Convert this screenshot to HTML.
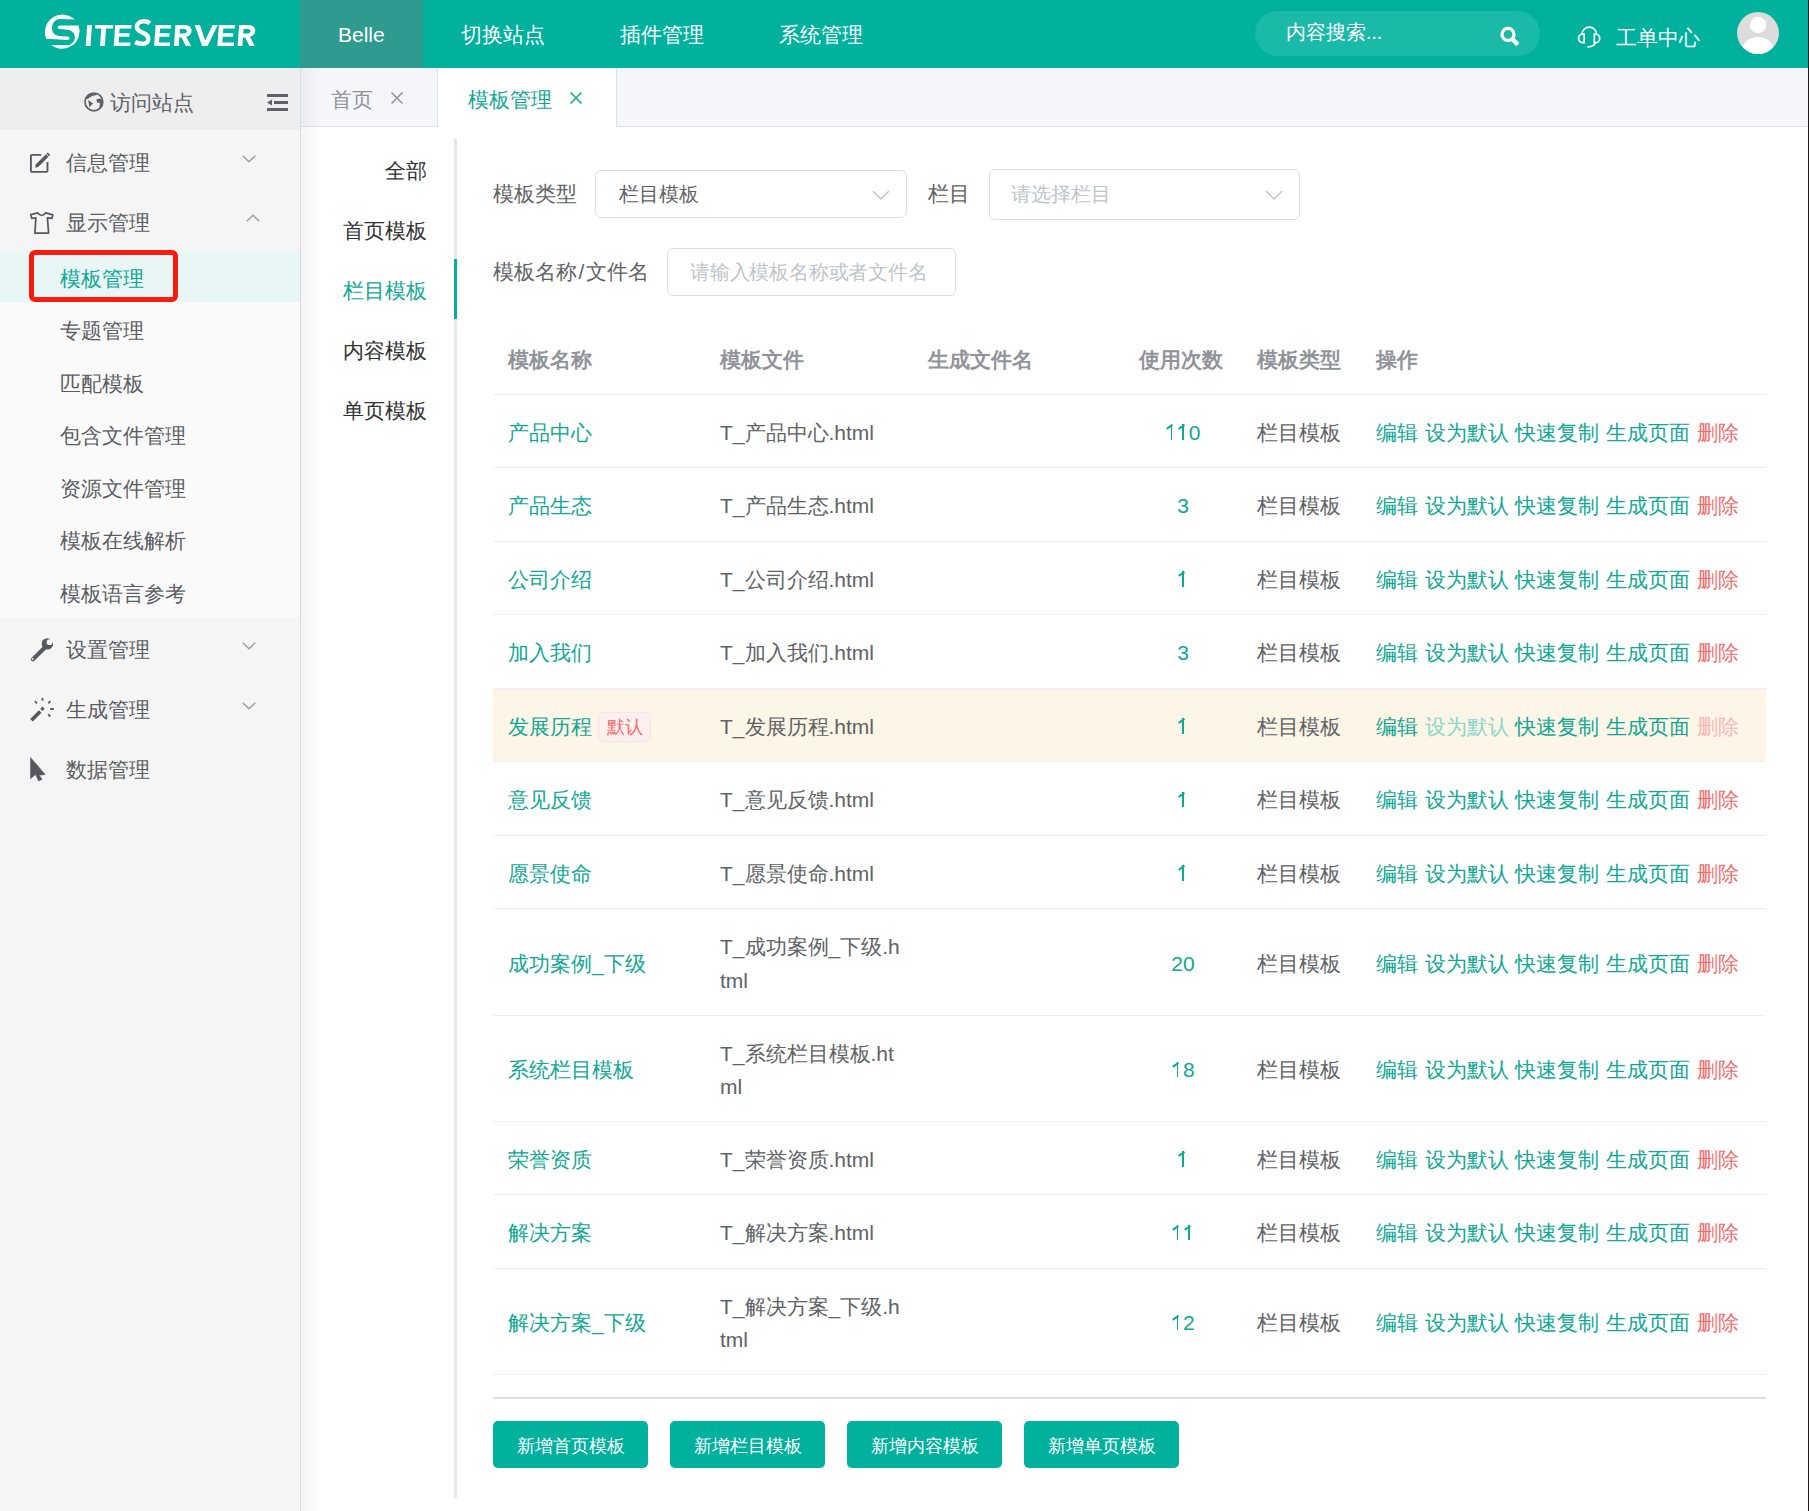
<!DOCTYPE html>
<html><head><meta charset="utf-8">
<style>
*{box-sizing:border-box;margin:0;padding:0}
html,body{width:1809px;height:1511px;overflow:hidden;background:#fff}
body{position:relative;font-family:"Liberation Sans",sans-serif;font-size:21px;line-height:21px;color:#606266}
.a{position:absolute}
.t{position:absolute;white-space:nowrap;line-height:21px}
#hdr{left:0;top:0;width:1809px;height:68px;background:#00b19d}
#side{left:0;top:68px;width:300px;height:1443px;background:#f5f5f5}
.sic{fill:#55585f}
.chev{position:absolute;width:14px;height:8px}
.lnk{color:#0fa894}
.d1{display:inline-block;width:11.7px;height:21px;position:relative;vertical-align:top}.d1::before{content:"";position:absolute;left:5.2px;top:2.6px;width:1.8px;height:15.2px;background:currentColor}.d1::after{content:"";position:absolute;left:0.8px;top:4.3px;width:6.6px;height:1.6px;background:currentColor;transform:rotate(-34deg)}
</style></head><body>
<!-- HEADER -->
<div id="hdr" class="a"></div>
<div class="a" style="left:300px;top:0;width:123px;height:68px;background:#2e9b8e"></div>
<!--LOGO-->
<svg class="a" style="left:0;top:0" width="300" height="68" viewBox="0 0 300 68">
 <g fill="#fff">
  <path d="M46.2 38.8 A17.6 17.6 0 0 1 74.8 19.6 L60 19 C55.5 19.3 52.3 22.8 52 27.5 C51.7 32.5 55 36.2 61.5 36.2 L67.6 36.5 C70.2 36.7 70.2 39.9 67.6 39.9 Z"/>
  <path d="M78.7 25.6 A17.6 17.6 0 0 1 51.2 45.1 L67 45.2 C72 45 74.9 41 74.9 37 C74.8 32.5 71 29.5 65.5 29.4 L59.5 29.1 C57.2 29 57.2 25.6 59.5 25.6 Z"/>
 </g>
 <g fill="#fff" transform="translate(0,46) skewX(-4) translate(0,-46)">
  <path d="M85.7 25 h4.8 v21 h-4.8 Z"/>
  <path d="M93.8 25 h18 v3.5 h-7 v17.5 h-4.8 v-17.5 h-6.2 Z"/>
  <path d="M113.7 25 h16.3 v3.5 h-11.6 v4.7 h10.4 v3.5 h-10.4 v5.8 h11.8 v3.5 h-16.5 Z"/>
  <path d="M154.1 25 h15.6 v3.5 h-10.9 v4.7 h9.9 v3.5 h-9.9 v5.8 h11.1 v3.5 h-15.8 Z"/>
  <path fill-rule="evenodd" d="M173.9 46 V25 H183.5 C188 25 190.6 27.8 190.6 31 C190.6 34 188.6 36.2 185.6 36.8 L191.2 46 H185.8 L180.9 37.4 H178.7 V46 Z M178.7 29 H182.8 C184.8 29 185.9 30 185.9 31.2 C185.9 32.5 184.8 33.4 182.8 33.4 H178.7 Z"/>
  <path d="M193.3 25 H198.5 L204.8 40.5 L211.1 25 H216.3 L207.6 46 H202 Z"/>
  <path d="M217.4 25 h16.2 v3.5 h-11.5 v4.7 h10.3 v3.5 h-10.3 v5.8 h11.7 v3.5 h-16.4 Z"/>
  <path fill-rule="evenodd" d="M237.6 46 V25 H247.2 C251.7 25 254.2 27.8 254.2 31 C254.2 34 252.3 36.2 249.3 36.8 L254.8 46 H249.4 L244.6 37.4 H242.4 V46 Z M242.4 29 H246.5 C248.5 29 249.6 30 249.6 31.2 C249.6 32.5 248.5 33.4 246.5 33.4 H242.4 Z"/>
 </g>
 <path transform="translate(0,46) skewX(-4) translate(0,-46)" d="M148.3 23.2 C146.5 21.8 144.3 21.3 141.8 21.3 C137.8 21.3 135.5 23.6 135.5 26.6 C135.5 30 138.2 31.4 141.8 32.8 C145.6 34.2 147.8 35.9 147.8 39.4 C147.8 42.4 145.3 43.8 141.8 43.8 C139 43.8 136.8 43.2 134.8 42" fill="none" stroke="#fff" stroke-width="4.4"/>
</svg>
<div class="t" style="left:338px;top:24px;color:#fff">Belle</div>
<div class="t" style="left:461px;top:24px;color:#fff">切换站点</div>
<div class="t" style="left:620px;top:24px;color:#fff">插件管理</div>
<div class="t" style="left:779px;top:24px;color:#fff">系统管理</div>
<div class="a" style="left:1255px;top:11px;width:285px;height:45px;border-radius:23px;background:rgba(255,255,255,0.105)"></div>
<div class="t" style="left:1286px;top:23px;color:#fff;font-size:19.5px;line-height:19.5px">内容搜索...</div>
<svg class="a" style="left:1499px;top:26px" width="24" height="22" viewBox="0 0 24 22">
 <circle cx="9" cy="8.4" r="6" fill="none" stroke="#fff" stroke-width="3.3"/>
 <path d="M12.8 12.6 L19 18.6" stroke="#fff" stroke-width="4.3" stroke-linecap="butt"/>
</svg>
<svg class="a" style="left:1576px;top:24px" width="26" height="26" viewBox="0 0 26 26">
 <g fill="none" stroke="#fff" stroke-width="1.7">
 <path d="M6 10.4 A7.3 7.3 0 0 1 20.6 10.4"/>
 <path d="M8.2 10.1 V18.6 H6.6 C4.1 18.6 2.6 16.5 2.6 14.4 C2.6 12.2 4.1 10.1 6.6 10.1 Z"/>
 <path d="M18.3 10.1 V18.6 H19.8 C22.3 18.6 23.7 16.5 23.7 14.4 C23.7 12.2 22.3 10.1 19.8 10.1 Z"/>
 <path d="M19.3 18.2 C18.8 21.2 16 23 11.4 22.9"/>
 </g>
</svg>
<div class="t" style="left:1616px;top:27px;color:#fff">工单中心</div>
<svg class="a" style="left:1737px;top:12px" width="42" height="42" viewBox="0 0 42 42">
 <defs><clipPath id="av"><circle cx="21" cy="21" r="21"/></clipPath></defs>
 <circle cx="21" cy="21" r="21" fill="#dcdcdc"/>
 <g clip-path="url(#av)" fill="#fff">
  <circle cx="21" cy="13" r="8.3"/>
  <ellipse cx="21" cy="39" rx="16" ry="14"/>
 </g>
</svg>

<div class="a" style="left:1808px;top:0;width:1px;height:1511px;background:#231619;z-index:9"></div>
<!-- SIDEBAR -->
<div id="side" class="a"></div>
<div class="a" style="left:0;top:68px;width:300px;height:62px;background:#eeeeee"></div>
<div class="a" style="left:300px;top:68px;width:1px;height:1443px;background:#d8dbe2"></div>
<svg class="a" style="left:84px;top:92px" width="20" height="20" viewBox="0 0 20 20">
 <circle cx="9.9" cy="9.9" r="8.9" fill="none" stroke="#5f6168" stroke-width="1.7"/>
 <path d="M1.5 7 C3 3 7 1 11 1 L13.5 1.6 L12.3 3.2 C9 3.3 6 4.5 3.8 7 Z" fill="#5f6168"/>
 <path d="M4.2 8 L9.1 11.4 L5.3 15.3 Z" fill="#5f6168"/>
 <path d="M12.3 7.3 L17.3 6.6 L18.8 9.5 C18.8 13 17.5 15.8 15 17.7 L16 10.8 L13.2 10.7 Z" fill="#5f6168"/>
</svg>
<div class="t" style="left:110px;top:92px;color:#5f6168">访问站点</div>
<svg class="a" style="left:267px;top:94px" width="22" height="18" viewBox="0 0 22 18">
 <rect x="0" y="0" width="21" height="3" fill="#5f6168"/>
 <rect x="7" y="7" width="14" height="3" fill="#5f6168"/>
 <path d="M0 8.5 L5 5.5 L5 11.5 Z" fill="#5f6168"/>
 <rect x="0" y="14" width="21" height="3" fill="#5f6168"/>
</svg>


<!-- side menu -->
<svg class="a" style="left:29px;top:151px" width="24" height="24" viewBox="0 0 24 24">
 <path d="M12.3 3.9 H2.8 Q1.9 3.9 1.9 4.8 V20 Q1.9 20.9 2.8 20.9 H17.6 Q18.5 20.9 18.5 20 V10.9" fill="none" stroke="#55585f" stroke-width="1.85"/>
 <path d="M6.1 16.7 L6.96 13.36 L16.96 3.36 L19.44 5.84 L9.44 15.84 Z" fill="#55585f"/>
 <path d="M17.46 2.86 L18.76 1.56 L21.24 4.04 L19.94 5.34 Z" fill="#55585f"/>
</svg>
<div class="t" style="left:66px;top:152px;color:#5a5d64">信息管理</div>
<svg class="chev" style="left:242px;top:155px" viewBox="0 0 14 8"><path d="M0.7 0.7 L7 6.8 L13.3 0.7" fill="none" stroke="#9a9ca2" stroke-width="1.4"/></svg>
<svg class="a" style="left:29px;top:211px" width="26" height="25" viewBox="0 0 26 25">
 <path d="M8.7 1.9 C10 4 11.2 4.3 12.7 4.3 C14.2 4.3 15.4 4 16.6 1.8 L23.8 3.8 L22.8 7.4 L18.4 6.8 L19.6 22 L5.9 22 L6.9 6.8 L2.9 7.4 L1.7 3.7 Z" fill="none" stroke="#55585f" stroke-width="1.75" stroke-linejoin="round"/>
</svg>
<div class="t" style="left:66px;top:212px;color:#5a5d64">显示管理</div>
<svg class="chev" style="left:246px;top:214px" viewBox="0 0 14 8"><path d="M0.7 7.3 L7 1.2 L13.3 7.3" fill="none" stroke="#9a9ca2" stroke-width="1.4"/></svg>

<div class="a" style="left:0;top:250px;width:300px;height:367px;background:#fafafa"></div>
<div class="a" style="left:0;top:250px;width:300px;height:52px;background:#e8f7f5"></div>
<div class="a" style="left:29px;top:250px;width:149px;height:52px;border:5px solid #ff1a0f;border-radius:6px"></div>
<div class="t lnk" style="left:60px;top:268px">模板管理</div>
<div class="t" style="left:60px;top:320px;color:#5a5d64">专题管理</div>
<div class="t" style="left:60px;top:373px;color:#5a5d64">匹配模板</div>
<div class="t" style="left:60px;top:425px;color:#5a5d64">包含文件管理</div>
<div class="t" style="left:60px;top:478px;color:#5a5d64">资源文件管理</div>
<div class="t" style="left:60px;top:530px;color:#5a5d64">模板在线解析</div>
<div class="t" style="left:60px;top:583px;color:#5a5d64">模板语言参考</div>

<svg class="a" style="left:29px;top:637px" width="26" height="26" viewBox="0 0 26 26">
 <defs><mask id="wm" maskUnits="userSpaceOnUse" x="0" y="0" width="26" height="26">
  <rect width="26" height="26" fill="#fff"/>
  <circle cx="20.5" cy="5.2" r="2.9" fill="#000"/>
  <path d="M20.5 5.2 L22 -2 L29 5 Z" fill="#000"/>
  <circle cx="3.7" cy="22" r="0.95" fill="#000"/>
 </mask></defs>
 <g mask="url(#wm)" fill="#55585f">
  <circle cx="18.4" cy="6.9" r="5.7"/>
  <path d="M3.9 22.4 L15.6 10.7" stroke="#55585f" stroke-width="4.1" stroke-linecap="round"/>
 </g>
</svg>
<div class="t" style="left:66px;top:639px;color:#5a5d64">设置管理</div>
<svg class="chev" style="left:242px;top:642px" viewBox="0 0 14 8"><path d="M0.7 0.7 L7 6.8 L13.3 0.7" fill="none" stroke="#9a9ca2" stroke-width="1.4"/></svg>
<svg class="a" style="left:29px;top:697px" width="26" height="26" viewBox="0 0 26 26">
 <path d="M2.5 23.2 L11.2 14.5" stroke="#55585f" stroke-width="3.7" stroke-linecap="butt"/>
 <path d="M13.5 9.6 L15.7 11.8 L13.5 14 L11.3 11.8 Z" fill="#55585f"/>
 <path d="M13.5 1.1 V3.8 M5.9 4.2 L8 6.3 M21.4 4.2 L19.3 6.3 M21.2 12 H24.8 M19.2 17.4 L21.3 19.5" stroke="#55585f" stroke-width="1.8"/>
</svg>
<div class="t" style="left:66px;top:699px;color:#5a5d64">生成管理</div>
<svg class="chev" style="left:242px;top:702px" viewBox="0 0 14 8"><path d="M0.7 0.7 L7 6.8 L13.3 0.7" fill="none" stroke="#9a9ca2" stroke-width="1.4"/></svg>
<svg class="a" style="left:29px;top:756px" width="18" height="26" viewBox="0 0 18 26">
 <path d="M1.5 1.4 L1.5 22.8 L6.5 18.6 L9.6 24.9 L13.1 23.4 L10.3 19.3 L16.2 18.5 Z" fill="#55585f" stroke="#55585f" stroke-width="0.5" stroke-linejoin="round"/>
</svg>
<div class="t" style="left:66px;top:759px;color:#5a5d64">数据管理</div>


<!-- TABS BAR -->
<div class="a" style="left:301px;top:68px;width:1508px;height:59px;background:#f5f6fa;border-bottom:1px solid #dfe2ea"></div>
<div class="a" style="left:301px;top:68px;width:20px;height:1443px;background:linear-gradient(to right,rgba(0,0,0,0.045),rgba(0,0,0,0))"></div>
<div class="a" style="left:437px;top:68px;width:1px;height:58px;background:#dfe2ea"></div>
<div class="a" style="left:438px;top:68px;width:179px;height:59px;background:#fff;border-right:1px solid #dfe2ea"></div>
<div class="t" style="left:331px;top:89px;color:#909399">首页</div>
<svg class="a" style="left:390px;top:91px" width="14" height="14" viewBox="0 0 14 14"><path d="M1.5 1.5 L12.5 12.5 M12.5 1.5 L1.5 12.5" stroke="#909399" stroke-width="1.5"/></svg>
<div class="t lnk" style="left:468px;top:89px">模板管理</div>
<svg class="a" style="left:569px;top:91px" width="14" height="14" viewBox="0 0 14 14"><path d="M1.5 1.5 L12.5 12.5 M12.5 1.5 L1.5 12.5" stroke="#0fa894" stroke-width="1.5"/></svg>

<!-- VERTICAL TABS -->
<div class="a" style="left:454px;top:139px;width:3px;height:1359px;background:#e4e7ed"></div>
<div class="a" style="left:454px;top:259px;width:3px;height:60px;background:#00b19d"></div>
<div class="t" style="right:1382px;top:160px;color:#303133">全部</div>
<div class="t" style="right:1382px;top:220px;color:#303133">首页模板</div>
<div class="t lnk" style="right:1382px;top:280px">栏目模板</div>
<div class="t" style="right:1382px;top:340px;color:#303133">内容模板</div>
<div class="t" style="right:1382px;top:400px;color:#303133">单页模板</div>

<!-- FORM -->
<div class="t" style="left:493px;top:183px">模板类型</div>
<div class="a" style="left:595px;top:170px;width:312px;height:48px;border:1px solid #dcdfe6;border-radius:6px"></div>
<div class="t" style="left:619px;top:184px;font-size:19.5px">栏目模板</div>
<svg class="a" style="left:872px;top:190px" width="18" height="10" viewBox="0 0 18 10"><path d="M1 1 L9 9 L17 1" fill="none" stroke="#c0c4cc" stroke-width="1.5"/></svg>
<div class="t" style="left:928px;top:183px">栏目</div>
<div class="a" style="left:989px;top:169px;width:311px;height:51px;border:1px solid #dcdfe6;border-radius:6px"></div>
<div class="t" style="left:1011px;top:184px;color:#c0c4cc;font-size:19.5px">请选择栏目</div>
<svg class="a" style="left:1265px;top:190px" width="18" height="10" viewBox="0 0 18 10"><path d="M1 1 L9 9 L17 1" fill="none" stroke="#c0c4cc" stroke-width="1.5"/></svg>
<div class="t" style="left:493px;top:261px">模板名称<span style="padding:0 1.6px">/</span>文件名</div>
<div class="a" style="left:667px;top:248px;width:289px;height:48px;border:1px solid #dcdfe6;border-radius:6px"></div>
<div class="t" style="left:690px;top:262px;color:#c0c4cc;font-size:19.5px"><span style="letter-spacing:-0.2px">请输入模板名称或者文件名</span></div>

<!-- TABLE -->
<div class="t" style="left:508px;top:349px;color:#909399;font-weight:bold">模板名称</div>
<div class="t" style="left:720px;top:349px;color:#909399;font-weight:bold">模板文件</div>
<div class="t" style="left:928px;top:349px;color:#909399;font-weight:bold">生成文件名</div>
<div class="t" style="left:1139px;top:349px;color:#909399;font-weight:bold">使用次数</div>
<div class="t" style="left:1257px;top:349px;color:#909399;font-weight:bold">模板类型</div>
<div class="t" style="left:1376px;top:349px;color:#909399;font-weight:bold">操作</div>
<div class="a" style="left:493px;top:394px;width:1273px;height:1px;background:#ebeef5"></div>
<div class="t lnk" style="left:508px;top:421.9px">产品中心</div>
<div class="t" style="left:720px;top:421.9px">T_产品中心.html</div>
<div class="t lnk" style="left:1124px;width:118px;text-align:center;top:421.9px"><i class="d1"></i><i class="d1"></i>0</div>
<div class="t" style="left:1257px;top:421.9px">栏目模板</div>
<div class="t lnk" style="left:1376px;word-spacing:0.9px;top:421.9px">编辑 <span>设为默认</span> 快速复制 生成页面 <span style="color:#f56c6c">删除</span></div>
<div class="a" style="left:493px;top:467px;width:1273px;height:1px;background:#ebeef5"></div>
<div class="t lnk" style="left:508px;top:495.4px">产品生态</div>
<div class="t" style="left:720px;top:495.4px">T_产品生态.html</div>
<div class="t lnk" style="left:1124px;width:118px;text-align:center;top:495.4px">3</div>
<div class="t" style="left:1257px;top:495.4px">栏目模板</div>
<div class="t lnk" style="left:1376px;word-spacing:0.9px;top:495.4px">编辑 <span>设为默认</span> 快速复制 生成页面 <span style="color:#f56c6c">删除</span></div>
<div class="a" style="left:493px;top:541px;width:1273px;height:1px;background:#ebeef5"></div>
<div class="t lnk" style="left:508px;top:568.9px">公司介绍</div>
<div class="t" style="left:720px;top:568.9px">T_公司介绍.html</div>
<div class="t lnk" style="left:1124px;width:118px;text-align:center;top:568.9px"><i class="d1"></i></div>
<div class="t" style="left:1257px;top:568.9px">栏目模板</div>
<div class="t lnk" style="left:1376px;word-spacing:0.9px;top:568.9px">编辑 <span>设为默认</span> 快速复制 生成页面 <span style="color:#f56c6c">删除</span></div>
<div class="a" style="left:493px;top:614px;width:1273px;height:1px;background:#ebeef5"></div>
<div class="t lnk" style="left:508px;top:642.4px">加入我们</div>
<div class="t" style="left:720px;top:642.4px">T_加入我们.html</div>
<div class="t lnk" style="left:1124px;width:118px;text-align:center;top:642.4px">3</div>
<div class="t" style="left:1257px;top:642.4px">栏目模板</div>
<div class="t lnk" style="left:1376px;word-spacing:0.9px;top:642.4px">编辑 <span>设为默认</span> 快速复制 生成页面 <span style="color:#f56c6c">删除</span></div>
<div class="a" style="left:493px;top:688px;width:1273px;height:1px;background:#ebeef5"></div>
<div class="a" style="left:493px;top:689px;width:1273px;height:72px;background:#fdf5e6"></div>
<div class="t lnk" style="left:508px;top:715.9px">发展历程</div>
<div class="a" style="left:598px;top:712px;width:53px;height:30px;border:1px solid #fde2e2;background:#fef0f0;border-radius:6px;color:#f56c6c;font-size:18px;line-height:28px;text-align:center">默认</div>
<div class="t" style="left:720px;top:715.9px">T_发展历程.html</div>
<div class="t lnk" style="left:1124px;width:118px;text-align:center;top:715.9px"><i class="d1"></i></div>
<div class="t" style="left:1257px;top:715.9px">栏目模板</div>
<div class="t lnk" style="left:1376px;word-spacing:0.9px;top:715.9px">编辑 <span style="color:#88d8ce">设为默认</span> 快速复制 生成页面 <span style="color:#f9b6b6">删除</span></div>
<div class="a" style="left:493px;top:761px;width:1273px;height:1px;background:#ebeef5"></div>
<div class="t lnk" style="left:508px;top:789.4px">意见反馈</div>
<div class="t" style="left:720px;top:789.4px">T_意见反馈.html</div>
<div class="t lnk" style="left:1124px;width:118px;text-align:center;top:789.4px"><i class="d1"></i></div>
<div class="t" style="left:1257px;top:789.4px">栏目模板</div>
<div class="t lnk" style="left:1376px;word-spacing:0.9px;top:789.4px">编辑 <span>设为默认</span> 快速复制 生成页面 <span style="color:#f56c6c">删除</span></div>
<div class="a" style="left:493px;top:835px;width:1273px;height:1px;background:#ebeef5"></div>
<div class="t lnk" style="left:508px;top:862.9px">愿景使命</div>
<div class="t" style="left:720px;top:862.9px">T_愿景使命.html</div>
<div class="t lnk" style="left:1124px;width:118px;text-align:center;top:862.9px"><i class="d1"></i></div>
<div class="t" style="left:1257px;top:862.9px">栏目模板</div>
<div class="t lnk" style="left:1376px;word-spacing:0.9px;top:862.9px">编辑 <span>设为默认</span> 快速复制 生成页面 <span style="color:#f56c6c">删除</span></div>
<div class="a" style="left:493px;top:908px;width:1273px;height:1px;background:#ebeef5"></div>
<div class="t lnk" style="left:508px;top:952.9px">成功案例_下级</div>
<div class="t" style="left:720px;top:936.2px">T_成功案例_下级.h</div>
<div class="t" style="left:720px;top:969.6px">tml</div>
<div class="t lnk" style="left:1124px;width:118px;text-align:center;top:952.9px">20</div>
<div class="t" style="left:1257px;top:952.9px">栏目模板</div>
<div class="t lnk" style="left:1376px;word-spacing:0.9px;top:952.9px">编辑 <span>设为默认</span> 快速复制 生成页面 <span style="color:#f56c6c">删除</span></div>
<div class="a" style="left:493px;top:1015px;width:1273px;height:1px;background:#ebeef5"></div>
<div class="t lnk" style="left:508px;top:1059.4px">系统栏目模板</div>
<div class="t" style="left:720px;top:1042.7px">T_系统栏目模板.ht</div>
<div class="t" style="left:720px;top:1076.1px">ml</div>
<div class="t lnk" style="left:1124px;width:118px;text-align:center;top:1059.4px"><i class="d1"></i>8</div>
<div class="t" style="left:1257px;top:1059.4px">栏目模板</div>
<div class="t lnk" style="left:1376px;word-spacing:0.9px;top:1059.4px">编辑 <span>设为默认</span> 快速复制 生成页面 <span style="color:#f56c6c">删除</span></div>
<div class="a" style="left:493px;top:1121px;width:1273px;height:1px;background:#ebeef5"></div>
<div class="t lnk" style="left:508px;top:1148.9px">荣誉资质</div>
<div class="t" style="left:720px;top:1148.9px">T_荣誉资质.html</div>
<div class="t lnk" style="left:1124px;width:118px;text-align:center;top:1148.9px"><i class="d1"></i></div>
<div class="t" style="left:1257px;top:1148.9px">栏目模板</div>
<div class="t lnk" style="left:1376px;word-spacing:0.9px;top:1148.9px">编辑 <span>设为默认</span> 快速复制 生成页面 <span style="color:#f56c6c">删除</span></div>
<div class="a" style="left:493px;top:1194px;width:1273px;height:1px;background:#ebeef5"></div>
<div class="t lnk" style="left:508px;top:1222.4px">解决方案</div>
<div class="t" style="left:720px;top:1222.4px">T_解决方案.html</div>
<div class="t lnk" style="left:1124px;width:118px;text-align:center;top:1222.4px"><i class="d1"></i><i class="d1"></i></div>
<div class="t" style="left:1257px;top:1222.4px">栏目模板</div>
<div class="t lnk" style="left:1376px;word-spacing:0.9px;top:1222.4px">编辑 <span>设为默认</span> 快速复制 生成页面 <span style="color:#f56c6c">删除</span></div>
<div class="a" style="left:493px;top:1268px;width:1273px;height:1px;background:#ebeef5"></div>
<div class="t lnk" style="left:508px;top:1312.4px">解决方案_下级</div>
<div class="t" style="left:720px;top:1295.7px">T_解决方案_下级.h</div>
<div class="t" style="left:720px;top:1329.1px">tml</div>
<div class="t lnk" style="left:1124px;width:118px;text-align:center;top:1312.4px"><i class="d1"></i>2</div>
<div class="t" style="left:1257px;top:1312.4px">栏目模板</div>
<div class="t lnk" style="left:1376px;word-spacing:0.9px;top:1312.4px">编辑 <span>设为默认</span> 快速复制 生成页面 <span style="color:#f56c6c">删除</span></div>
<div class="a" style="left:493px;top:1374px;width:1273px;height:1px;background:#ebeef5"></div>
<div class="a" style="left:493px;top:1397px;width:1273px;height:2px;background:#dcdfe6"></div>
<div class="a" style="left:493px;top:1421px;width:155px;height:47px;background:#00b19d;border-radius:5px;color:#fff;font-size:18px;line-height:47px;padding-top:1.5px;text-align:center">新增首页模板</div>
<div class="a" style="left:670px;top:1421px;width:155px;height:47px;background:#00b19d;border-radius:5px;color:#fff;font-size:18px;line-height:47px;padding-top:1.5px;text-align:center">新增栏目模板</div>
<div class="a" style="left:847px;top:1421px;width:155px;height:47px;background:#00b19d;border-radius:5px;color:#fff;font-size:18px;line-height:47px;padding-top:1.5px;text-align:center">新增内容模板</div>
<div class="a" style="left:1024px;top:1421px;width:155px;height:47px;background:#00b19d;border-radius:5px;color:#fff;font-size:18px;line-height:47px;padding-top:1.5px;text-align:center">新增单页模板</div>
</body></html>
